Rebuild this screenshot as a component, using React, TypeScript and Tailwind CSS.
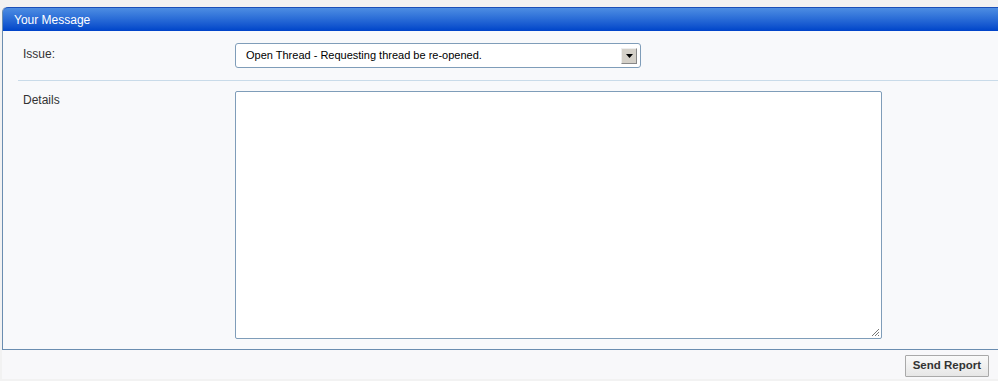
import React from 'react';

const ReportForm: React.FC = () => {
  return (
    <div className="min-h-[381px] w-[998px] overflow-hidden bg-[#f2f2f2] pt-[7px] pl-[2px] font-['Liberation_Sans',Arial,sans-serif]">
      {/* Panel */}
      <div className="w-[1010px] rounded-tl-[5px] border-l border-b border-[#6a8db0] bg-[#f8f9fb]">
        <div className="flex h-[24px] items-center rounded-tl-[5px] border-t border-[#1a4fb8] bg-gradient-to-b from-[#4d8de2] to-[#0043c9] pl-[11px] text-[12px] text-white">
          Your Message
        </div>

        {/* Issue row */}
        <div className="ml-[15px] flex border-b border-[#c9dbe9] pt-[12px] pb-[12px]">
          <div className="w-[217px] pl-[5px] pt-[2px] text-[12px] text-[#333]">Issue:</div>
          <div className="flex h-[25px] w-[406px] items-center justify-between rounded-[3px] border border-[#7f9db9] bg-white pl-[10px] pr-[3px] text-[11px] text-black">
            <span>Open Thread - Requesting thread be re-opened.</span>
            <span className="flex h-[16px] w-[16px] items-center justify-center border border-t-[#eee] border-l-[#eee] border-r-[#888] border-b-[#888] bg-[#d4d0c8]">
              <svg width="7" height="4" viewBox="0 0 7 4">
                <path d="M0 0h7L3.5 4z" fill="#000" />
              </svg>
            </span>
          </div>
        </div>

        {/* Details row */}
        <div className="ml-[15px] flex pt-[10px] pb-[10px]">
          <div className="w-[217px] pl-[5px] text-[12px] text-[#333]">Details</div>
          <div className="relative h-[248px] w-[647px] rounded-[2px] border border-[#7f9db9] bg-white">
            <svg className="absolute right-[1px] bottom-[1px]" width="9" height="9" viewBox="0 0 9 9">
              <path d="M8 1L1 8M8 4L4 8M8 7L7 8" stroke="#777" strokeWidth="1" />
            </svg>
          </div>
        </div>
      </div>

      {/* Footer */}
      <div className="flex h-[29px] items-start justify-end bg-[#f8f8fa] pt-[5px] pr-[9px]">
        <button className="h-[22px] rounded-[1px] border border-[#a9a9a9] bg-gradient-to-b from-[#fafafa] to-[#e6e6e6] px-[7px] text-[11.5px] font-bold text-[#333]">
          Send Report
        </button>
      </div>
    </div>
  );
};

export default function App() {
  return <ReportForm />;
}
